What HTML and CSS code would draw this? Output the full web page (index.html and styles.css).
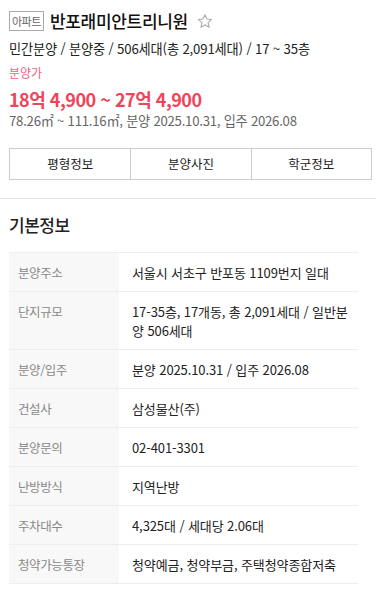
FILE: index.html
```html
<!DOCTYPE html>
<html lang="ko">
<head>
<meta charset="utf-8">
<link rel="stylesheet" href="styles.css">
</head>
<body>
<div class="top">
  <div class="title-row">
    <span class="badge">아파트</span>
    <h1 class="title">반포래미안트리니원</h1>
    <svg class="star" width="16" height="16" viewBox="0 0 24 24"><path d="M12 2.5l2.9 6.6 7.1.6-5.4 4.7 1.6 7-6.2-3.7-6.2 3.7 1.6-7L2 9.7l7.1-.6z" fill="none" stroke="#aaa" stroke-width="1.6" stroke-linejoin="round"/></svg>
  </div>
  <p class="summary">민간분양 / 분양중 / 506세대(총 2,091세대) / 17 ~ 35층</p>
  <p class="price-label">분양가</p>
  <p class="price">18억 4,900 ~ 27억 4,900</p>
  <p class="meta">78.26㎡ ~ 111.16㎡, 분양 2025.10.31, 입주 2026.08</p>
  <div class="tabs">
    <a class="tab">평형정보</a>
    <a class="tab">분양사진</a>
    <a class="tab">학군정보</a>
  </div>
</div>
<section class="info">
  <h2 class="info-title">기본정보</h2>
  <div class="table">
    <div class="row"><div class="th">분양주소</div><div class="td">서울시 서초구 반포동 1109번지 일대</div></div>
    <div class="row"><div class="th">단지규모</div><div class="td">17-35층, 17개동, 총 2,091세대 / 일반분양 506세대</div></div>
    <div class="row"><div class="th">분양/입주</div><div class="td">분양 2025.10.31 / 입주 2026.08</div></div>
    <div class="row"><div class="th">건설사</div><div class="td">삼성물산(주)</div></div>
    <div class="row"><div class="th">분양문의</div><div class="td">02-401-3301</div></div>
    <div class="row"><div class="th">난방방식</div><div class="td">지역난방</div></div>
    <div class="row"><div class="th">주차대수</div><div class="td">4,325대 / 세대당 2.06대</div></div>
    <div class="row"><div class="th">청약가능통장</div><div class="td">청약예금, 청약부금, 주택청약종합저축</div></div>
  </div>
</section>
</body>
</html>
```

FILE: styles.css
```css
* { box-sizing: border-box; }
html, body { margin: 0; padding: 0; background: #fff; }
body {
  font-family: "Noto Sans CJK KR", "Noto Sans", sans-serif;
  color: #222;
  width: 376px;
}
p, h1, h2 { margin: 0; font-weight: normal; }

.top { padding: 10px 4px 0 9px; }
.title-row { display: flex; align-items: center; height: 22px; }
.badge {
  font-size: 11px; line-height: 16px; color: #666;
  border: 1px solid #aaa; padding: 1px 2px; margin-right: 6px;
  letter-spacing: -0.5px;
}
.title { font-size: 17px; line-height: 22px; font-weight: 500; color: #111; letter-spacing: -0.3px; }
.star { margin-left: 9px; }

.summary { font-size: 13.2px; line-height: 18px; margin-top: 8px; letter-spacing: -0.15px; color: #222; }
.price-label { font-size: 12px; line-height: 16px; margin-top: 7px; color: #f0607f; }
.price { font-size: 18px; line-height: 22px; margin-top: 7px; font-weight: bold; color: #f0445a; letter-spacing: -0.5px; }
.meta { font-size: 13.2px; line-height: 18px; margin-top: 2px; color: #666; letter-spacing: -0.25px; }

.tabs {
  display: grid; grid-template-columns: repeat(3, 1fr);
  margin-top: 18px; border: 1px solid #ccc;
}
.tab {
  font-size: 12.5px; line-height: 30px; text-align: center; color: #222;
  border-left: 1px solid #ccc;
}
.tab:first-child { border-left: 0; }

.info { margin-top: 18px; border-top: 1px solid #e6e6e6; padding: 0 18px 0 9px; }
.info-title { font-size: 17px; line-height: 22px; margin-top: 15px; font-weight: 500; letter-spacing: -0.5px; }
.table { margin-top: 16px; border-top: 1px solid #eee; }
.row { display: grid; grid-template-columns: 110px 1fr; border-bottom: 1px solid #eee; }
.th { background: #f8f8f8; color: #888; font-size: 12.5px; line-height: 19px; padding: 10px 9px 9px; letter-spacing: -0.4px; }
.td { color: #222; font-size: 13px; line-height: 19px; padding: 10px 2px 9px 13px; letter-spacing: -0.1px; word-break: break-all; }
```
